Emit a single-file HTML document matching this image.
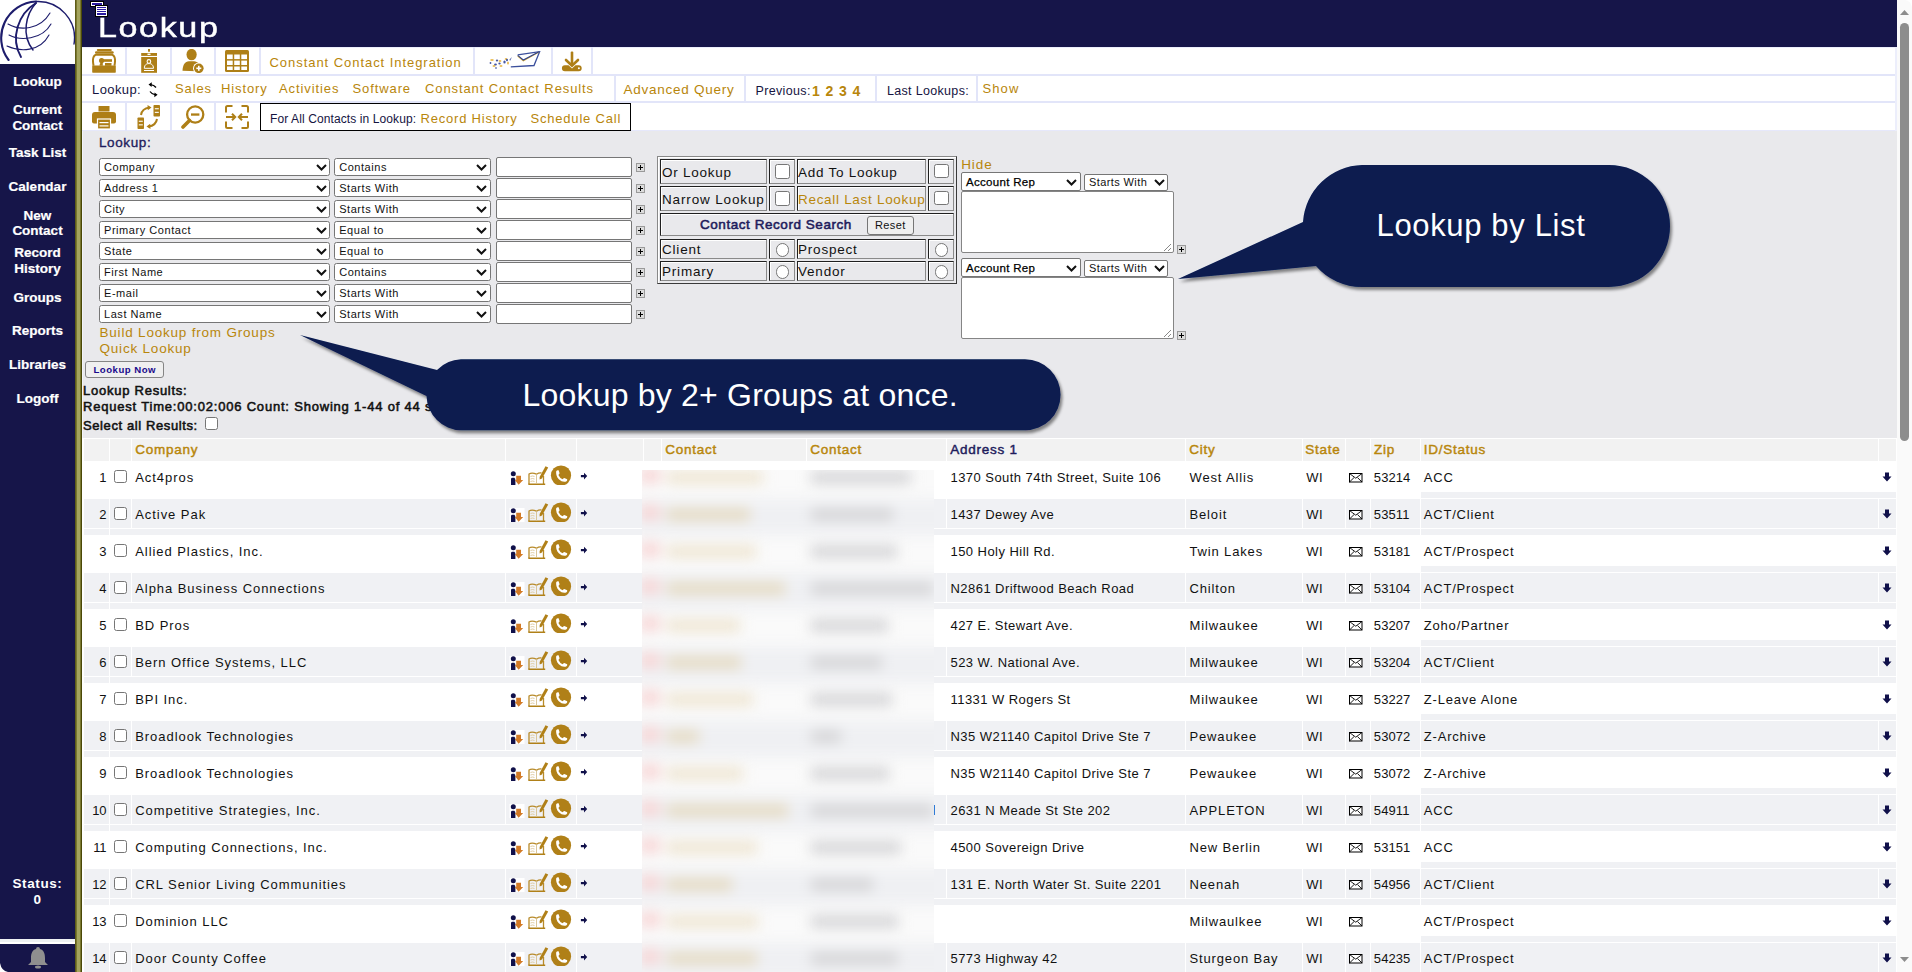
<!DOCTYPE html><html><head><meta charset="utf-8"><style>
*{box-sizing:border-box;}
html,body{margin:0;padding:0;}
body{width:1912px;height:972px;overflow:hidden;position:relative;background:#fff;font-family:"Liberation Sans", sans-serif;color:#111;}
.a{position:absolute;white-space:nowrap;}
.sel{position:absolute;height:18px;background:#fff;border:1.5px solid #767676;border-radius:2.5px;}
.chev{position:absolute;width:6px;height:6px;border-right:2px solid #111;border-bottom:2px solid #111;transform:rotate(45deg);}
.inp{position:absolute;height:20px;background:#fff;border:1.5px solid #767676;border-radius:2px;}
.plus{position:absolute;width:9px;height:9px;background:#dcdcdc;border:1px solid #9a9a9a;}
.plus:before{content:"";position:absolute;left:1px;top:3.1px;width:5px;height:1.4px;background:#000;}
.plus:after{content:"";position:absolute;left:2.8px;top:1px;width:1.4px;height:5px;background:#000;}
.cb{position:absolute;width:13px;height:13px;background:#fff;border:1px solid #767676;border-radius:2.5px;}
.rd{position:absolute;width:13px;height:13px;background:#fff;border:1px solid #767676;border-radius:50%;}
.tc{position:absolute;border:1px solid;border-color:#8a8a8a #2a2a2a #2a2a2a #8a8a8a;}
</style></head><body><svg width="0" height="0" style="position:absolute"><defs>
<g id="rowic">
<rect x="0.5" y="7" width="15" height="15" fill="#fff"/>
<circle cx="4.3" cy="9.8" r="2.5" fill="#10104a"/><path d="M2 15 Q2 13.8 3.5 13.8 H5.3 Q6.4 14.5 6.4 16 V21.4 H2z" fill="#10104a"/>
<path d="M7.2 11.8 H12 V15.9 H14.2 L9.6 20.8 L5.9 15.9 H7.2z" fill="#d27a26"/>
<path d="M20 20 V10 Q23 8.2 27.5 10.2 Q30 8.6 32.5 9 M34.5 12 V20" fill="none" stroke="#b88b2a" stroke-width="1.3"/>
<path d="M19.3 20.3 H36.2" stroke="#b08018" stroke-width="1.6"/>
<path d="M21.5 12.5 Q23.5 11.5 25.5 12.5 M21.5 15 Q23.5 14 25.5 15 M21.5 17.5 Q23.5 16.5 25.5 17.5" fill="none" stroke="#dcc79a" stroke-width="0.9"/>
<path d="M27.5 10.2 V20" stroke="#d6c08e" stroke-width="0.9"/>
<path d="M36.5 2.2 L39.2 3.6 L33 14.6 L30.6 15.5 L30.6 13z" fill="#b08018"/>
<circle cx="52" cy="11.5" r="10.1" fill="#b08018"/>
<path d="M47.2 7.3 Q48 5.8 49.6 6.3 L50.6 9.3 Q50 10.4 49.4 10.9 Q50.8 13.9 53.6 15.3 Q54.2 14.5 55.3 14 L58.2 15.2 Q58.6 16.8 57.2 17.5 Q53.4 18.6 49.8 15.2 Q46.5 11.8 47.2 7.3z" fill="#fff"/>
<path d="M71.9 11 H75 V8.7 L78.2 12.1 L75 15.5 V13.2 H71.9z" fill="#10104a"/>
</g>
<g id="env"><rect x="0.5" y="0.5" width="12.5" height="8.5" fill="#fff" stroke="#000" stroke-width="1"/><path d="M0.5 0.5 L6.75 5.2 L13 0.5 M0.5 9 L5 4.6 M13 9 L8.5 4.6" fill="none" stroke="#000" stroke-width="0.9"/></g>
<g id="dn"><path d="M3 0.5 H7 V4.5 H9.5 L5 9.5 L0.5 4.5 H3z" fill="#10104a"/></g>
</defs></svg><div class="a" style="left:0px;top:0px;width:75px;height:972px;background:#161549"></div>
<div class="a" style="left:0px;top:0px;width:75px;height:64px;background:#fff"></div>
<svg class="a" style="left:0;top:0" width="75" height="64" viewBox="0 0 75 64">
<g fill="none" stroke="#1d1c6c" stroke-linecap="round">
<path d="M8.6 60 A36.5 36.5 0 0 1 36 1.5" stroke-width="2.1"/><path d="M36 1.5 A36.5 36.5 0 0 1 74 44" stroke-width="1.4"/>
<path d="M36 3 C18 14 10 38 21 57" stroke-width="1.9"/>
<path d="M36 3 C26 14 21 35 33 50" stroke-width="1.5"/>
<path d="M8 24 C20 31 40 30 50 13" stroke-width="1.1"/>
<path d="M9 35 C20 41 42 40 51 24" stroke-width="1.1"/>
<path d="M7 46 C20 52 40 52 49 35" stroke-width="1.1"/>
</g></svg>
<div class="a" style="left:0;width:75px;text-align:center;top:74.6px;font-size:13.5px;line-height:13.5px;color:#fff;font-weight:bold;letter-spacing:0px;-webkit-text-stroke:0.2px #fff">Lookup</div>
<div class="a" style="left:0;width:75px;text-align:center;top:102.8px;font-size:13.5px;line-height:13.5px;color:#fff;font-weight:bold;letter-spacing:0px;-webkit-text-stroke:0.2px #fff">Current</div>
<div class="a" style="left:0;width:75px;text-align:center;top:119.2px;font-size:13.5px;line-height:13.5px;color:#fff;font-weight:bold;letter-spacing:0px;-webkit-text-stroke:0.2px #fff">Contact</div>
<div class="a" style="left:0;width:75px;text-align:center;top:146.2px;font-size:13.5px;line-height:13.5px;color:#fff;font-weight:bold;letter-spacing:0px;-webkit-text-stroke:0.2px #fff">Task List</div>
<div class="a" style="left:0;width:75px;text-align:center;top:180.2px;font-size:13.5px;line-height:13.5px;color:#fff;font-weight:bold;letter-spacing:0px;-webkit-text-stroke:0.2px #fff">Calendar</div>
<div class="a" style="left:0;width:75px;text-align:center;top:209.0px;font-size:13.5px;line-height:13.5px;color:#fff;font-weight:bold;letter-spacing:0px;-webkit-text-stroke:0.2px #fff">New</div>
<div class="a" style="left:0;width:75px;text-align:center;top:224.2px;font-size:13.5px;line-height:13.5px;color:#fff;font-weight:bold;letter-spacing:0px;-webkit-text-stroke:0.2px #fff">Contact</div>
<div class="a" style="left:0;width:75px;text-align:center;top:246.2px;font-size:13.5px;line-height:13.5px;color:#fff;font-weight:bold;letter-spacing:0px;-webkit-text-stroke:0.2px #fff">Record</div>
<div class="a" style="left:0;width:75px;text-align:center;top:262.2px;font-size:13.5px;line-height:13.5px;color:#fff;font-weight:bold;letter-spacing:0px;-webkit-text-stroke:0.2px #fff">History</div>
<div class="a" style="left:0;width:75px;text-align:center;top:290.5px;font-size:13.5px;line-height:13.5px;color:#fff;font-weight:bold;letter-spacing:0px;-webkit-text-stroke:0.2px #fff">Groups</div>
<div class="a" style="left:0;width:75px;text-align:center;top:324.4px;font-size:13.5px;line-height:13.5px;color:#fff;font-weight:bold;letter-spacing:0px;-webkit-text-stroke:0.2px #fff">Reports</div>
<div class="a" style="left:0;width:75px;text-align:center;top:358.2px;font-size:13.5px;line-height:13.5px;color:#fff;font-weight:bold;letter-spacing:0px;-webkit-text-stroke:0.2px #fff">Libraries</div>
<div class="a" style="left:0;width:75px;text-align:center;top:392.4px;font-size:13.5px;line-height:13.5px;color:#fff;font-weight:bold;letter-spacing:0px;-webkit-text-stroke:0.2px #fff">Logoff</div>
<div class="a" style="left:0;width:75px;text-align:center;top:877.2px;font-size:13.5px;line-height:13.5px;color:#fff;font-weight:bold;letter-spacing:0.6px">Status:</div>
<div class="a" style="left:0;width:75px;text-align:center;top:893.2px;font-size:13.5px;line-height:13.5px;color:#fff;font-weight:bold;letter-spacing:0.6px">0</div>
<div class="a" style="left:0px;top:939px;width:75px;height:3px;background:#eef1f3"></div>
<div class="a" style="left:0px;top:942px;width:75px;height:2px;background:#fff"></div>
<svg class="a" style="left:28px;top:945px" width="20" height="24" viewBox="0 0 20 24">
<path d="M10 2 a2 2 0 0 1 2 2 c4 1 5 5 5 9 l0 4 l3 3 l-20 0 l3 -3 l0 -4 c0 -4 1 -8 5 -9 a2 2 0 0 1 2 -2z" fill="#8f8f8f"/>
<ellipse cx="10" cy="22" rx="3" ry="1.5" fill="#8f8f8f"/></svg>
<div class="a" style="left:75px;top:0px;width:7px;height:972px;background:linear-gradient(90deg,#5e5c18 0,#5e5c18 1px,#7a7830 1px,#7a7830 2px,#a4a45e 2px,#a4a45e 5px,#7a7830 5px,#7a7830 5.6px,#4a4808 5.6px,#4a4808 7px)"></div>
<div class="a" style="left:82px;top:0px;width:1815px;height:47px;background:#161549"></div>
<svg class="a" style="left:90px;top:1px" width="19" height="16" viewBox="0 0 19 16" shape-rendering="crispEdges">
<rect x="0" y="0" width="14" height="6" fill="#000"/><rect x="1" y="1" width="12" height="4" fill="#fff"/><rect x="2" y="2" width="10" height="2" fill="#2a1aa0"/>
<rect x="5" y="4" width="13" height="12" fill="#000"/><rect x="6" y="5" width="11" height="10" fill="#fff"/>
<rect x="7" y="6" width="9" height="1" fill="#2a1aa0"/><rect x="7" y="8" width="9" height="1" fill="#2a1aa0"/><rect x="7" y="10" width="9" height="1" fill="#2a1aa0"/><rect x="7" y="12" width="9" height="2" fill="#2a1aa0"/>
</svg>
<div class="a" style="left:97.5px;top:13.8px;font-size:27.6px;line-height:27.6px;color:#fff;font-weight:400;letter-spacing:1.3px;transform:scaleX(1.235);transform-origin:0 0;-webkit-text-stroke:0.45px #fff;">Lookup</div>
<div class="a" style="left:1897px;top:0px;width:15px;height:972px;background:#fafafa"></div>
<svg class="a" style="left:1897px;top:0" width="15" height="972"><path d="M3 15 L7.5 10 L12 15z" fill="#8d8d8d"/><path d="M3 957 L12 957 L7.5 962z" fill="#8d8d8d"/><rect x="3" y="23" width="9" height="418" rx="4.5" fill="#8d8d8d"/></svg>
<div class="a" style="left:82px;top:47px;width:1815px;height:84px;background:#fff"></div>
<div class="a" style="left:82px;top:47px;width:1814px;height:1px;background:#eceefb"></div>
<div class="a" style="left:82px;top:74px;width:1814px;height:2px;background:#e2e5f9"></div>
<div class="a" style="left:82px;top:101px;width:1814px;height:2px;background:#e2e5f9"></div>
<div class="a" style="left:82px;top:130px;width:1814px;height:1px;background:#e6e8fb"></div>
<div class="a" style="left:1895px;top:47px;width:2px;height:84px;background:#eceefb"></div>
<div class="a" style="left:125px;top:47px;width:2px;height:27px;background:#e2e5f9"></div>
<div class="a" style="left:170px;top:47px;width:2px;height:27px;background:#e2e5f9"></div>
<div class="a" style="left:214px;top:47px;width:2px;height:27px;background:#e2e5f9"></div>
<div class="a" style="left:259px;top:47px;width:2px;height:27px;background:#e2e5f9"></div>
<div class="a" style="left:473px;top:47px;width:2px;height:27px;background:#e2e5f9"></div>
<div class="a" style="left:551px;top:47px;width:2px;height:27px;background:#e2e5f9"></div>
<div class="a" style="left:591px;top:47px;width:2px;height:27px;background:#e2e5f9"></div>
<div class="a" style="left:614px;top:76px;width:2px;height:25px;background:#e2e5f9"></div>
<div class="a" style="left:744px;top:76px;width:2px;height:25px;background:#e2e5f9"></div>
<div class="a" style="left:875px;top:76px;width:2px;height:25px;background:#e2e5f9"></div>
<div class="a" style="left:976px;top:76px;width:2px;height:25px;background:#e2e5f9"></div>
<div class="a" style="left:125px;top:103px;width:2px;height:28px;background:#e2e5f9"></div>
<div class="a" style="left:170px;top:103px;width:2px;height:28px;background:#e2e5f9"></div>
<div class="a" style="left:214px;top:103px;width:2px;height:28px;background:#e2e5f9"></div>
<svg class="a" style="left:92px;top:49px" width="24" height="24" viewBox="0 0 24 24" fill="#ae7f17">
<rect x="4.8" y="0" width="15" height="2" rx="1"/><rect x="3" y="2.3" width="18.7" height="2.4" rx="1.2"/>
<path d="M1.6 16.8 C0.6 12 0.4 7.2 3.6 5.8 H20.4 C23.6 7.2 23.4 12 22.4 16.8" fill="none" stroke="#ae7f17" stroke-width="2"/>
<circle cx="9.6" cy="11.6" r="2.6"/><rect x="9.6" y="10.2" width="10.4" height="2.6"/>
<path d="M7.6 16.8 Q7.6 13.5 9.6 13.8 H10.8 V16.8z"/><rect x="13" y="14" width="6.5" height="2.8"/>
<rect x="0.2" y="16.5" width="23.6" height="7.2" rx="0.6"/></svg>
<svg class="a" style="left:141px;top:49px" width="16" height="24" viewBox="0 0 16 24" fill="#ae7f17">
<rect x="7" y="0" width="2" height="2.7"/><rect x="0.2" y="4" width="15.8" height="2.9"/><rect x="6.5" y="4.6" width="3" height="1.4" fill="#fff"/>
<rect x="0.2" y="8" width="15.8" height="15.8"/>
<circle cx="7.9" cy="12.4" r="1.8" fill="none" stroke="#fff" stroke-width="1.1"/>
<path d="M3.3 19.3 C3.5 15.6 5.5 14.6 7.9 14.6 C10.3 14.6 12.3 15.6 12.5 19.3z" fill="none" stroke="#fff" stroke-width="1"/>
<rect x="3" y="21" width="10" height="1" fill="#fff"/></svg>
<svg class="a" style="left:182px;top:49px" width="24" height="24" viewBox="0 0 24 24" fill="#ae7f17">
<ellipse cx="9.6" cy="5.6" rx="5.1" ry="5.7"/>
<path d="M0.5 21.8 C0.8 15.5 3 12.8 7 12.3 L12 12.3 C14 12.5 15.5 13.2 16.6 14.2 L15 22.2z"/>
<circle cx="16.8" cy="19.3" r="5.8" fill="#fff"/><circle cx="16.8" cy="19.3" r="4.8"/>
<rect x="14.3" y="18.5" width="5" height="1.6" fill="#fff"/><rect x="16" y="16.8" width="1.6" height="5" fill="#fff"/></svg>
<svg class="a" style="left:225px;top:50px" width="24" height="22" viewBox="0 0 24 22" fill="#ae7f17">
<rect x="0" y="0" width="24" height="22" rx="1.5"/>
<g fill="#fff"><rect x="2" y="4.5" width="5.7" height="4.6"/><rect x="9.2" y="4.5" width="5.6" height="4.6"/><rect x="16.3" y="4.5" width="5.7" height="4.6"/>
<rect x="2" y="10.6" width="5.7" height="4.4"/><rect x="9.2" y="10.6" width="5.6" height="4.4"/><rect x="16.3" y="10.6" width="5.7" height="4.4"/>
<rect x="2" y="16.5" width="5.7" height="3.5"/><rect x="9.2" y="16.5" width="5.6" height="3.5"/><rect x="16.3" y="16.5" width="5.7" height="3.5"/></g></svg>
<div class="a" style="left:269.5px;top:56.3px;font-size:13px;line-height:13px;color:#b8860b;font-weight:400;letter-spacing:0.95px;">Constant Contact Integration</div>
<svg class="a" style="left:489px;top:51px" width="52" height="19" viewBox="0 0 52 19">
<path d="M28.7 3.8 L50.6 0.7 L45 14.5 L21.8 15.8" fill="none" stroke="#3b4f9c" stroke-width="1.3"/>
<path d="M28.7 5 L34.3 9.8 L50 1" fill="none" stroke="#e0b030" stroke-width="1.1"/>
<path d="M28.7 4.4 L34.3 9 L50 0.8" fill="none" stroke="#2e418e" stroke-width="1.1"/>
<g fill="#e8b43a" opacity="0.85"><ellipse cx="3" cy="9" rx="1.8" ry="0.9"/><ellipse cx="5" cy="15" rx="1.5" ry="1"/><ellipse cx="11" cy="10" rx="1.4" ry="1"/><ellipse cx="12" cy="15" rx="1.5" ry="1"/><ellipse cx="17" cy="8" rx="1.3" ry="0.9"/><ellipse cx="19" cy="12" rx="1" ry="1.6"/></g>
<g fill="#34479a" opacity="0.9"><ellipse cx="1.5" cy="12" rx="0.9" ry="0.9"/><ellipse cx="8" cy="9.5" rx="1.2" ry="0.9"/><ellipse cx="6.5" cy="13.5" rx="1.4" ry="0.9"/><ellipse cx="10.5" cy="12.5" rx="1.2" ry="0.9"/><ellipse cx="7" cy="17" rx="1" ry="0.8"/><ellipse cx="15.5" cy="11" rx="1.2" ry="1.6"/><ellipse cx="18" cy="9" rx="1" ry="1.2"/><path d="M20.5 8.5 L23 6 L21 10z"/></g></svg>
<svg class="a" style="left:561px;top:51px" width="22" height="21" viewBox="0 0 22 21" fill="#ae7f17">
<rect x="9.7" y="0.5" width="2.6" height="13.5" rx="1"/><path d="M5 9 L11 14.8 L17 9" fill="none" stroke="#ae7f17" stroke-width="2.6" stroke-linecap="round"/>
<path d="M3.9 14.2 H7.5 L11 17.5 L14.5 14.2 H17.7 A3 3 0 0 1 17.7 20.2 H3.9 A3 3 0 0 1 3.9 14.2z"/><circle cx="17.9" cy="17.3" r="1" fill="#fff"/></svg>
<div class="a" style="left:92.0px;top:82.5px;font-size:13px;line-height:13px;color:#15143f;font-weight:400;letter-spacing:0.4px;">Lookup:</div>
<svg class="a" style="left:146px;top:80px" width="14" height="20" viewBox="146 80 14 20">
<path d="M156 87.5 Q154 84.8 150.5 84.6" fill="none" stroke="#000" stroke-width="1.3"/><path d="M148.5 84.6 L151.8 82.2 L151.6 87z" fill="#000"/>
<path d="M150 91.5 Q152 94.5 155.5 94.8" fill="none" stroke="#000" stroke-width="1.3"/><path d="M157.6 94.8 L154.3 97.2 L154.5 92.4z" fill="#000"/></svg>
<div class="a" style="left:175.0px;top:82.1px;font-size:13px;line-height:13px;color:#b8860b;font-weight:400;letter-spacing:0.9px;">Sales</div>
<div class="a" style="left:221.0px;top:82.1px;font-size:13px;line-height:13px;color:#b8860b;font-weight:400;letter-spacing:0.9px;">History</div>
<div class="a" style="left:279.0px;top:82.1px;font-size:13px;line-height:13px;color:#b8860b;font-weight:400;letter-spacing:0.9px;">Activities</div>
<div class="a" style="left:352.5px;top:82.1px;font-size:13px;line-height:13px;color:#b8860b;font-weight:400;letter-spacing:0.9px;">Software</div>
<div class="a" style="left:425.0px;top:82.1px;font-size:13px;line-height:13px;color:#b8860b;font-weight:400;letter-spacing:0.9px;">Constant Contact Results</div>
<div class="a" style="left:623.5px;top:83.4px;font-size:13.5px;line-height:13.5px;color:#b8860b;font-weight:400;letter-spacing:0.75px;">Advanced Query</div>
<div class="a" style="left:755.5px;top:84.8px;font-size:12.5px;line-height:12.5px;color:#15143f;font-weight:400;letter-spacing:0.35px;">Previous:</div>
<div class="a" style="left:812.0px;top:83.7px;font-size:14px;line-height:14px;color:#b8860b;font-weight:700;letter-spacing:0.9px;">1 2 3 4</div>
<div class="a" style="left:887.0px;top:84.8px;font-size:12.5px;line-height:12.5px;color:#15143f;font-weight:400;letter-spacing:0.32px;">Last Lookups:</div>
<div class="a" style="left:982.5px;top:81.7px;font-size:13px;line-height:13px;color:#b8860b;font-weight:400;letter-spacing:1.1px;">Show</div>
<svg class="a" style="left:92px;top:106px" width="24" height="23" viewBox="0 0 24 23" fill="#ae7f17">
<rect x="6.5" y="0" width="11" height="5.5"/><path d="M3 6 H21 Q24 6 24 9 V15.5 Q24 17.5 22 17.5 H2 Q0 17.5 0 15.5 V9 Q0 6 3 6z"/>
<rect x="5.5" y="13" width="13" height="10" fill="#ae7f17" stroke="#fff" stroke-width="1.2"/>
<rect x="7.5" y="16" width="9" height="1.2" fill="#fff"/><rect x="7.5" y="19.3" width="9" height="1.2" fill="#fff"/></svg>
<svg class="a" style="left:137px;top:105px" width="24" height="24" viewBox="0 0 24 24" fill="#ae7f17">
<rect x="16.5" y="0" width="6.5" height="11.5" rx="0.8"/><rect x="17.8" y="3.2" width="4" height="1.1" fill="#fff"/><rect x="17.8" y="6.8" width="4" height="1.1" fill="#fff"/>
<rect x="0.5" y="12.5" width="6.5" height="11.5" rx="0.8"/><rect x="1.8" y="15.7" width="4" height="1.1" fill="#fff"/><rect x="1.8" y="19.3" width="4" height="1.1" fill="#fff"/>
<path d="M4 10 Q5 3.5 12.5 2.5" fill="none" stroke="#ae7f17" stroke-width="2"/><path d="M10.5 0 L14.5 2.6 L10.8 5.3z"/>
<path d="M20 14 Q19 20.5 11.5 21.5" fill="none" stroke="#ae7f17" stroke-width="2"/><path d="M13.5 24 L9.5 21.4 L13.2 18.7z"/></svg>
<svg class="a" style="left:181px;top:105px" width="24" height="24" viewBox="0 0 24 24">
<circle cx="14.2" cy="9.5" r="8.1" fill="none" stroke="#ae7f17" stroke-width="2.3"/><rect x="10" y="8.4" width="8.4" height="2.3" fill="#ae7f17"/>
<path d="M8.5 15.5 L2 22" stroke="#ae7f17" stroke-width="3.6" stroke-linecap="round"/></svg>
<svg class="a" style="left:225px;top:105px" width="24" height="24" viewBox="0 0 24 24" fill="none" stroke="#ae7f17" stroke-width="2">
<path d="M7.5 1 H2.5 Q1 1 1 2.5 V7.5"/><path d="M16.5 1 H21.5 Q23 1 23 2.5 V7.5"/><path d="M7.5 23 H2.5 Q1 23 1 21.5 V16.5"/><path d="M16.5 23 H21.5 Q23 23 23 21.5 V16.5"/>
<path d="M1 12 H10 M7 8.8 L10.2 12 L7 15.2"/><path d="M23 12 H14 M17 8.8 L13.8 12 L17 15.2"/></svg>
<div class="a" style="left:260px;top:103px;width:371px;height:28px;background:#fff;border:1.5px solid #000"></div>
<div class="a" style="left:270.0px;top:112.9px;font-size:12px;line-height:12px;color:#15143f;font-weight:400;letter-spacing:0.1px;">For All Contacts in Lookup:</div>
<div class="a" style="left:420.5px;top:112.1px;font-size:13px;line-height:13px;color:#b8860b;font-weight:400;letter-spacing:0.8px;">Record History</div>
<div class="a" style="left:530.5px;top:112.1px;font-size:13px;line-height:13px;color:#b8860b;font-weight:400;letter-spacing:0.8px;">Schedule Call</div>
<div class="a" style="left:83px;top:131px;width:1814px;height:307px;background:#e9e9ec"></div>
<div class="a" style="left:82px;top:131px;width:1px;height:307px;background:#f3f4fa"></div>
<div class="a" style="left:99.0px;top:135.8px;font-size:13.5px;line-height:13.5px;color:#1e1c5c;font-weight:400;letter-spacing:0.6px;-webkit-text-stroke:0.35px #1e1c5c;">Lookup:</div>
<div class="sel" style="left:99px;top:158px;width:231px"></div>
<svg class="a" style="left:315.5px;top:163.5px" width="11" height="7" viewBox="0 0 11 7"><path d="M1 1 L5.5 5.5 L10 1" fill="none" stroke="#111" stroke-width="2"/></svg>
<div class="a" style="left:104.0px;top:161.9px;font-size:11px;line-height:11px;color:#111;font-weight:400;letter-spacing:0.55px;">Company</div>
<div class="sel" style="left:334px;top:158px;width:157px"></div>
<svg class="a" style="left:476px;top:163.5px" width="11" height="7" viewBox="0 0 11 7"><path d="M1 1 L5.5 5.5 L10 1" fill="none" stroke="#111" stroke-width="2"/></svg>
<div class="a" style="left:339.2px;top:161.9px;font-size:11px;line-height:11px;color:#111;font-weight:400;letter-spacing:0.55px;">Contains</div>
<div class="inp" style="left:496px;top:157px;width:136px"></div>
<div class="plus" style="left:636px;top:163px"></div>
<div class="sel" style="left:99px;top:179px;width:231px"></div>
<svg class="a" style="left:315.5px;top:184.5px" width="11" height="7" viewBox="0 0 11 7"><path d="M1 1 L5.5 5.5 L10 1" fill="none" stroke="#111" stroke-width="2"/></svg>
<div class="a" style="left:104.0px;top:182.9px;font-size:11px;line-height:11px;color:#111;font-weight:400;letter-spacing:0.55px;">Address 1</div>
<div class="sel" style="left:334px;top:179px;width:157px"></div>
<svg class="a" style="left:476px;top:184.5px" width="11" height="7" viewBox="0 0 11 7"><path d="M1 1 L5.5 5.5 L10 1" fill="none" stroke="#111" stroke-width="2"/></svg>
<div class="a" style="left:339.2px;top:182.9px;font-size:11px;line-height:11px;color:#111;font-weight:400;letter-spacing:0.55px;">Starts With</div>
<div class="inp" style="left:496px;top:178px;width:136px"></div>
<div class="plus" style="left:636px;top:184px"></div>
<div class="sel" style="left:99px;top:200px;width:231px"></div>
<svg class="a" style="left:315.5px;top:205.5px" width="11" height="7" viewBox="0 0 11 7"><path d="M1 1 L5.5 5.5 L10 1" fill="none" stroke="#111" stroke-width="2"/></svg>
<div class="a" style="left:104.0px;top:203.9px;font-size:11px;line-height:11px;color:#111;font-weight:400;letter-spacing:0.55px;">City</div>
<div class="sel" style="left:334px;top:200px;width:157px"></div>
<svg class="a" style="left:476px;top:205.5px" width="11" height="7" viewBox="0 0 11 7"><path d="M1 1 L5.5 5.5 L10 1" fill="none" stroke="#111" stroke-width="2"/></svg>
<div class="a" style="left:339.2px;top:203.9px;font-size:11px;line-height:11px;color:#111;font-weight:400;letter-spacing:0.55px;">Starts With</div>
<div class="inp" style="left:496px;top:199px;width:136px"></div>
<div class="plus" style="left:636px;top:205px"></div>
<div class="sel" style="left:99px;top:221px;width:231px"></div>
<svg class="a" style="left:315.5px;top:226.5px" width="11" height="7" viewBox="0 0 11 7"><path d="M1 1 L5.5 5.5 L10 1" fill="none" stroke="#111" stroke-width="2"/></svg>
<div class="a" style="left:104.0px;top:224.9px;font-size:11px;line-height:11px;color:#111;font-weight:400;letter-spacing:0.55px;">Primary Contact</div>
<div class="sel" style="left:334px;top:221px;width:157px"></div>
<svg class="a" style="left:476px;top:226.5px" width="11" height="7" viewBox="0 0 11 7"><path d="M1 1 L5.5 5.5 L10 1" fill="none" stroke="#111" stroke-width="2"/></svg>
<div class="a" style="left:339.2px;top:224.9px;font-size:11px;line-height:11px;color:#111;font-weight:400;letter-spacing:0.55px;">Equal to</div>
<div class="inp" style="left:496px;top:220px;width:136px"></div>
<div class="plus" style="left:636px;top:226px"></div>
<div class="sel" style="left:99px;top:242px;width:231px"></div>
<svg class="a" style="left:315.5px;top:247.5px" width="11" height="7" viewBox="0 0 11 7"><path d="M1 1 L5.5 5.5 L10 1" fill="none" stroke="#111" stroke-width="2"/></svg>
<div class="a" style="left:104.0px;top:245.9px;font-size:11px;line-height:11px;color:#111;font-weight:400;letter-spacing:0.55px;">State</div>
<div class="sel" style="left:334px;top:242px;width:157px"></div>
<svg class="a" style="left:476px;top:247.5px" width="11" height="7" viewBox="0 0 11 7"><path d="M1 1 L5.5 5.5 L10 1" fill="none" stroke="#111" stroke-width="2"/></svg>
<div class="a" style="left:339.2px;top:245.9px;font-size:11px;line-height:11px;color:#111;font-weight:400;letter-spacing:0.55px;">Equal to</div>
<div class="inp" style="left:496px;top:241px;width:136px"></div>
<div class="plus" style="left:636px;top:247px"></div>
<div class="sel" style="left:99px;top:263px;width:231px"></div>
<svg class="a" style="left:315.5px;top:268.5px" width="11" height="7" viewBox="0 0 11 7"><path d="M1 1 L5.5 5.5 L10 1" fill="none" stroke="#111" stroke-width="2"/></svg>
<div class="a" style="left:104.0px;top:266.9px;font-size:11px;line-height:11px;color:#111;font-weight:400;letter-spacing:0.55px;">First Name</div>
<div class="sel" style="left:334px;top:263px;width:157px"></div>
<svg class="a" style="left:476px;top:268.5px" width="11" height="7" viewBox="0 0 11 7"><path d="M1 1 L5.5 5.5 L10 1" fill="none" stroke="#111" stroke-width="2"/></svg>
<div class="a" style="left:339.2px;top:266.9px;font-size:11px;line-height:11px;color:#111;font-weight:400;letter-spacing:0.55px;">Contains</div>
<div class="inp" style="left:496px;top:262px;width:136px"></div>
<div class="plus" style="left:636px;top:268px"></div>
<div class="sel" style="left:99px;top:284px;width:231px"></div>
<svg class="a" style="left:315.5px;top:289.5px" width="11" height="7" viewBox="0 0 11 7"><path d="M1 1 L5.5 5.5 L10 1" fill="none" stroke="#111" stroke-width="2"/></svg>
<div class="a" style="left:104.0px;top:287.9px;font-size:11px;line-height:11px;color:#111;font-weight:400;letter-spacing:0.55px;">E-mail</div>
<div class="sel" style="left:334px;top:284px;width:157px"></div>
<svg class="a" style="left:476px;top:289.5px" width="11" height="7" viewBox="0 0 11 7"><path d="M1 1 L5.5 5.5 L10 1" fill="none" stroke="#111" stroke-width="2"/></svg>
<div class="a" style="left:339.2px;top:287.9px;font-size:11px;line-height:11px;color:#111;font-weight:400;letter-spacing:0.55px;">Starts With</div>
<div class="inp" style="left:496px;top:283px;width:136px"></div>
<div class="plus" style="left:636px;top:289px"></div>
<div class="sel" style="left:99px;top:305px;width:231px"></div>
<svg class="a" style="left:315.5px;top:310.5px" width="11" height="7" viewBox="0 0 11 7"><path d="M1 1 L5.5 5.5 L10 1" fill="none" stroke="#111" stroke-width="2"/></svg>
<div class="a" style="left:104.0px;top:308.9px;font-size:11px;line-height:11px;color:#111;font-weight:400;letter-spacing:0.55px;">Last Name</div>
<div class="sel" style="left:334px;top:305px;width:157px"></div>
<svg class="a" style="left:476px;top:310.5px" width="11" height="7" viewBox="0 0 11 7"><path d="M1 1 L5.5 5.5 L10 1" fill="none" stroke="#111" stroke-width="2"/></svg>
<div class="a" style="left:339.2px;top:308.9px;font-size:11px;line-height:11px;color:#111;font-weight:400;letter-spacing:0.55px;">Starts With</div>
<div class="inp" style="left:496px;top:304px;width:136px"></div>
<div class="plus" style="left:636px;top:310px"></div>
<div class="a" style="left:99.5px;top:325.9px;font-size:13.5px;line-height:13.5px;color:#b8860b;font-weight:400;letter-spacing:0.8px;">Build Lookup from Groups</div>
<div class="a" style="left:99.5px;top:342.2px;font-size:13.5px;line-height:13.5px;color:#b8860b;font-weight:400;letter-spacing:0.8px;">Quick Lookup</div>
<div class="a" style="left:85px;top:361px;width:79px;height:17px;background:#efefef;border:1px solid #858585;border-radius:3px"></div>
<div class="a" style="left:93.5px;top:364.9px;font-size:9.6px;line-height:9.6px;color:#1a0a8c;font-weight:700;letter-spacing:0.5px;">Lookup Now</div>
<div class="a" style="left:83.0px;top:384.3px;font-size:13px;line-height:13px;color:#111;font-weight:400;letter-spacing:0.75px;-webkit-text-stroke:0.55px #111;">Lookup Results:</div>
<div class="a" style="left:83.0px;top:400.4px;font-size:13px;line-height:13px;color:#111;font-weight:400;letter-spacing:0.8px;-webkit-text-stroke:0.55px #111;">Request Time:00:02:006 Count: Showing 1-44 of 44 s</div>
<div class="a" style="left:83.0px;top:419.2px;font-size:13px;line-height:13px;color:#111;font-weight:400;letter-spacing:0.6px;-webkit-text-stroke:0.55px #111;">Select all Results:</div>
<div class="cb" style="left:205px;top:417px;width:13px;height:13px"></div>
<div class="a" style="left:657px;top:156px;width:300px;height:128px;border:1px solid;border-color:#888 #3a3a3a #3a3a3a #888;box-shadow:inset 1px 1px 0 #fff"></div>
<div class="a" style="left:660px;top:159px;width:107px;height:25px;border:1px solid;border-color:#202020 #8a8a8a #8a8a8a #202020;box-shadow:inset 1px 1px 0 #fff"></div>
<div class="a" style="left:769px;top:159px;width:26px;height:25px;border:1px solid;border-color:#202020 #8a8a8a #8a8a8a #202020;box-shadow:inset 1px 1px 0 #fff"></div>
<div class="a" style="left:797px;top:159px;width:129px;height:25px;border:1px solid;border-color:#202020 #8a8a8a #8a8a8a #202020;box-shadow:inset 1px 1px 0 #fff"></div>
<div class="a" style="left:928px;top:159px;width:26px;height:25px;border:1px solid;border-color:#202020 #8a8a8a #8a8a8a #202020;box-shadow:inset 1px 1px 0 #fff"></div>
<div class="a" style="left:660px;top:186px;width:107px;height:25px;border:1px solid;border-color:#202020 #8a8a8a #8a8a8a #202020;box-shadow:inset 1px 1px 0 #fff"></div>
<div class="a" style="left:769px;top:186px;width:26px;height:25px;border:1px solid;border-color:#202020 #8a8a8a #8a8a8a #202020;box-shadow:inset 1px 1px 0 #fff"></div>
<div class="a" style="left:797px;top:186px;width:129px;height:25px;border:1px solid;border-color:#202020 #8a8a8a #8a8a8a #202020;box-shadow:inset 1px 1px 0 #fff"></div>
<div class="a" style="left:928px;top:186px;width:26px;height:25px;border:1px solid;border-color:#202020 #8a8a8a #8a8a8a #202020;box-shadow:inset 1px 1px 0 #fff"></div>
<div class="a" style="left:660px;top:213px;width:294px;height:23px;border:1px solid;border-color:#202020 #8a8a8a #8a8a8a #202020;box-shadow:inset 1px 1px 0 #fff"></div>
<div class="a" style="left:660px;top:239px;width:107px;height:20px;border:1px solid;border-color:#202020 #8a8a8a #8a8a8a #202020;box-shadow:inset 1px 1px 0 #fff"></div>
<div class="a" style="left:769px;top:239px;width:26px;height:20px;border:1px solid;border-color:#202020 #8a8a8a #8a8a8a #202020;box-shadow:inset 1px 1px 0 #fff"></div>
<div class="a" style="left:797px;top:239px;width:129px;height:20px;border:1px solid;border-color:#202020 #8a8a8a #8a8a8a #202020;box-shadow:inset 1px 1px 0 #fff"></div>
<div class="a" style="left:928px;top:239px;width:26px;height:20px;border:1px solid;border-color:#202020 #8a8a8a #8a8a8a #202020;box-shadow:inset 1px 1px 0 #fff"></div>
<div class="a" style="left:660px;top:261px;width:107px;height:20px;border:1px solid;border-color:#202020 #8a8a8a #8a8a8a #202020;box-shadow:inset 1px 1px 0 #fff"></div>
<div class="a" style="left:769px;top:261px;width:26px;height:20px;border:1px solid;border-color:#202020 #8a8a8a #8a8a8a #202020;box-shadow:inset 1px 1px 0 #fff"></div>
<div class="a" style="left:797px;top:261px;width:129px;height:20px;border:1px solid;border-color:#202020 #8a8a8a #8a8a8a #202020;box-shadow:inset 1px 1px 0 #fff"></div>
<div class="a" style="left:928px;top:261px;width:26px;height:20px;border:1px solid;border-color:#202020 #8a8a8a #8a8a8a #202020;box-shadow:inset 1px 1px 0 #fff"></div>
<div class="a" style="left:662.0px;top:165.7px;font-size:13.5px;line-height:13.5px;color:#111;font-weight:400;letter-spacing:0.75px;">Or Lookup</div>
<div class="a" style="left:798.0px;top:165.7px;font-size:13.5px;line-height:13.5px;color:#111;font-weight:400;letter-spacing:0.75px;">Add To Lookup</div>
<div class="a" style="left:662.0px;top:192.7px;font-size:13.5px;line-height:13.5px;color:#111;font-weight:400;letter-spacing:0.85px;">Narrow Lookup</div>
<div class="a" style="left:798.0px;top:192.7px;font-size:13.5px;line-height:13.5px;color:#b8860b;font-weight:400;letter-spacing:0.7px;">Recall Last Lookup</div>
<div class="a" style="left:700.0px;top:218.2px;font-size:13.5px;line-height:13.5px;color:#1e1c5c;font-weight:400;letter-spacing:0.55px;-webkit-text-stroke:0.55px #1e1c5c;">Contact Record Search</div>
<div class="a" style="left:867px;top:215.5px;width:47px;height:19px;background:#efefef;border:1px solid #767676;border-radius:3px"></div>
<div class="a" style="left:875.0px;top:219.9px;font-size:11px;line-height:11px;color:#111;font-weight:400;letter-spacing:0.4px;">Reset</div>
<div class="a" style="left:662.0px;top:242.7px;font-size:13.5px;line-height:13.5px;color:#111;font-weight:400;letter-spacing:0.8px;">Client</div>
<div class="a" style="left:798.0px;top:242.7px;font-size:13.5px;line-height:13.5px;color:#111;font-weight:400;letter-spacing:0.8px;">Prospect</div>
<div class="a" style="left:662.0px;top:264.7px;font-size:13.5px;line-height:13.5px;color:#111;font-weight:400;letter-spacing:0.8px;">Primary</div>
<div class="a" style="left:798.0px;top:264.7px;font-size:13.5px;line-height:13.5px;color:#111;font-weight:400;letter-spacing:0.8px;">Vendor</div>
<div class="cb" style="left:775px;top:164px;width:14.6px;height:14.6px"></div>
<div class="cb" style="left:934.3px;top:164px;width:14.3px;height:14.3px"></div>
<div class="cb" style="left:775px;top:191px;width:14.6px;height:14.6px"></div>
<div class="cb" style="left:934.3px;top:191px;width:14.3px;height:14.3px"></div>
<div class="rd" style="left:775.5px;top:243.3px;width:13.6px;height:13.6px"></div>
<div class="rd" style="left:934.6px;top:243.3px;width:13.6px;height:13.6px"></div>
<div class="rd" style="left:775.5px;top:265.3px;width:13.6px;height:13.6px"></div>
<div class="rd" style="left:934.6px;top:265.3px;width:13.6px;height:13.6px"></div>
<div class="a" style="left:961.2px;top:157.7px;font-size:13.5px;line-height:13.5px;color:#b8860b;font-weight:400;letter-spacing:0.9px;">Hide</div>
<div class="sel" style="left:961px;top:172px;width:120px;height:19px;border-width:1px;border-radius:2px"></div>
<svg class="a" style="left:1066px;top:178.5px" width="11" height="7" viewBox="0 0 11 7"><path d="M1 1 L5.5 5.5 L10 1" fill="none" stroke="#111" stroke-width="2"/></svg>
<div class="a" style="left:966.0px;top:176.8px;font-size:11.5px;line-height:11.5px;color:#000;font-weight:400;letter-spacing:0.3px;-webkit-text-stroke:0.25px #000;">Account Rep</div>
<div class="sel" style="left:1084px;top:173.5px;width:84px;height:17px;border-width:1px;border-radius:2px"></div>
<svg class="a" style="left:1154px;top:178.5px" width="11" height="7" viewBox="0 0 11 7"><path d="M1 1 L5.5 5.5 L10 1" fill="none" stroke="#111" stroke-width="2"/></svg>
<div class="a" style="left:1089.0px;top:176.9px;font-size:11px;line-height:11px;color:#111;font-weight:400;letter-spacing:0.4px;">Starts With</div>
<div class="a" style="left:961px;top:191px;width:213px;height:62px;background:#fff;border:1px solid #858585;border-radius:2px"></div>
<svg class="a" style="left:1162px;top:242px" width="10" height="10"><path d="M9 2 L2 9 M9 6 L6 9" stroke="#888" stroke-width="1"/></svg>
<div class="plus" style="left:1177px;top:245px"></div>
<div class="sel" style="left:961px;top:258px;width:120px;height:19px;border-width:1px;border-radius:2px"></div>
<svg class="a" style="left:1066px;top:264.5px" width="11" height="7" viewBox="0 0 11 7"><path d="M1 1 L5.5 5.5 L10 1" fill="none" stroke="#111" stroke-width="2"/></svg>
<div class="a" style="left:966.0px;top:262.8px;font-size:11.5px;line-height:11.5px;color:#000;font-weight:400;letter-spacing:0.3px;-webkit-text-stroke:0.25px #000;">Account Rep</div>
<div class="sel" style="left:1084px;top:259.5px;width:84px;height:17px;border-width:1px;border-radius:2px"></div>
<svg class="a" style="left:1154px;top:264.5px" width="11" height="7" viewBox="0 0 11 7"><path d="M1 1 L5.5 5.5 L10 1" fill="none" stroke="#111" stroke-width="2"/></svg>
<div class="a" style="left:1089.0px;top:262.9px;font-size:11px;line-height:11px;color:#111;font-weight:400;letter-spacing:0.4px;">Starts With</div>
<div class="a" style="left:961px;top:277px;width:213px;height:62px;background:#fff;border:1px solid #858585;border-radius:2px"></div>
<svg class="a" style="left:1162px;top:328px" width="10" height="10"><path d="M9 2 L2 9 M9 6 L6 9" stroke="#888" stroke-width="1"/></svg>
<div class="plus" style="left:1177px;top:331px"></div>
<div class="a" style="left:84px;top:439px;width:1812px;height:22px;background:#f2f2f2"></div>
<div class="a" style="left:109px;top:439px;width:1px;height:22px;background:#fff"></div>
<div class="a" style="left:131px;top:439px;width:1px;height:22px;background:#fff"></div>
<div class="a" style="left:505px;top:439px;width:1px;height:22px;background:#fff"></div>
<div class="a" style="left:576px;top:439px;width:1px;height:22px;background:#fff"></div>
<div class="a" style="left:643px;top:439px;width:1px;height:22px;background:#fff"></div>
<div class="a" style="left:661px;top:439px;width:1px;height:22px;background:#fff"></div>
<div class="a" style="left:806px;top:439px;width:1px;height:22px;background:#fff"></div>
<div class="a" style="left:946px;top:439px;width:1px;height:22px;background:#fff"></div>
<div class="a" style="left:1185px;top:439px;width:1px;height:22px;background:#fff"></div>
<div class="a" style="left:1302px;top:439px;width:1px;height:22px;background:#fff"></div>
<div class="a" style="left:1345px;top:439px;width:1px;height:22px;background:#fff"></div>
<div class="a" style="left:1370px;top:439px;width:1px;height:22px;background:#fff"></div>
<div class="a" style="left:1420px;top:439px;width:1px;height:22px;background:#fff"></div>
<div class="a" style="left:1878px;top:439px;width:1px;height:22px;background:#fff"></div>
<div class="a" style="left:135.2px;top:442.9px;font-size:13.5px;line-height:13.5px;color:#b8860b;font-weight:400;letter-spacing:0.75px;-webkit-text-stroke:0.45px #b8860b;">Company</div>
<div class="a" style="left:665.2px;top:442.9px;font-size:13.5px;line-height:13.5px;color:#b8860b;font-weight:400;letter-spacing:0.75px;-webkit-text-stroke:0.45px #b8860b;">Contact</div>
<div class="a" style="left:810.2px;top:442.9px;font-size:13.5px;line-height:13.5px;color:#b8860b;font-weight:400;letter-spacing:0.75px;-webkit-text-stroke:0.45px #b8860b;">Contact</div>
<div class="a" style="left:950.2px;top:442.9px;font-size:13.5px;line-height:13.5px;color:#1e1c5c;font-weight:400;letter-spacing:0.75px;-webkit-text-stroke:0.45px #1e1c5c;">Address 1</div>
<div class="a" style="left:1189.2px;top:442.9px;font-size:13.5px;line-height:13.5px;color:#b8860b;font-weight:400;letter-spacing:0.75px;-webkit-text-stroke:0.45px #b8860b;">City</div>
<div class="a" style="left:1305.2px;top:442.9px;font-size:13.5px;line-height:13.5px;color:#b8860b;font-weight:400;letter-spacing:0.75px;-webkit-text-stroke:0.45px #b8860b;">State</div>
<div class="a" style="left:1374.0px;top:442.9px;font-size:13.5px;line-height:13.5px;color:#b8860b;font-weight:400;letter-spacing:0.75px;-webkit-text-stroke:0.45px #b8860b;">Zip</div>
<div class="a" style="left:1423.8px;top:442.9px;font-size:13.5px;line-height:13.5px;color:#b8860b;font-weight:400;letter-spacing:0.75px;-webkit-text-stroke:0.45px #b8860b;">ID/Status</div>
<div class="a" style="left:1421px;top:492px;width:475px;height:6px;background:#f0f1f4"></div>
<div class="a" style="left:84px;top:499px;width:1812px;height:29px;background:#f0f1f4"></div>
<div class="a" style="left:109px;top:499px;width:1px;height:29px;background:#fff"></div>
<div class="a" style="left:131px;top:499px;width:1px;height:29px;background:#fff"></div>
<div class="a" style="left:505px;top:499px;width:1px;height:29px;background:#fff"></div>
<div class="a" style="left:576px;top:499px;width:1px;height:29px;background:#fff"></div>
<div class="a" style="left:643px;top:499px;width:1px;height:29px;background:#fff"></div>
<div class="a" style="left:661px;top:499px;width:1px;height:29px;background:#fff"></div>
<div class="a" style="left:806px;top:499px;width:1px;height:29px;background:#fff"></div>
<div class="a" style="left:946px;top:499px;width:1px;height:29px;background:#fff"></div>
<div class="a" style="left:1185px;top:499px;width:1px;height:29px;background:#fff"></div>
<div class="a" style="left:1302px;top:499px;width:1px;height:29px;background:#fff"></div>
<div class="a" style="left:1345px;top:499px;width:1px;height:29px;background:#fff"></div>
<div class="a" style="left:1370px;top:499px;width:1px;height:29px;background:#fff"></div>
<div class="a" style="left:1420px;top:499px;width:1px;height:29px;background:#fff"></div>
<div class="a" style="left:1878px;top:499px;width:1px;height:29px;background:#fff"></div>
<div class="a" style="left:84px;top:529px;width:1812px;height:6px;background:#f0f1f4"></div>
<div class="a" style="left:109px;top:529px;width:1px;height:6px;background:#fff"></div>
<div class="a" style="left:1420px;top:529px;width:1px;height:6px;background:#fff"></div>
<div class="a" style="left:1421px;top:566px;width:475px;height:6px;background:#f0f1f4"></div>
<div class="a" style="left:84px;top:573px;width:1812px;height:29px;background:#f0f1f4"></div>
<div class="a" style="left:109px;top:573px;width:1px;height:29px;background:#fff"></div>
<div class="a" style="left:131px;top:573px;width:1px;height:29px;background:#fff"></div>
<div class="a" style="left:505px;top:573px;width:1px;height:29px;background:#fff"></div>
<div class="a" style="left:576px;top:573px;width:1px;height:29px;background:#fff"></div>
<div class="a" style="left:643px;top:573px;width:1px;height:29px;background:#fff"></div>
<div class="a" style="left:661px;top:573px;width:1px;height:29px;background:#fff"></div>
<div class="a" style="left:806px;top:573px;width:1px;height:29px;background:#fff"></div>
<div class="a" style="left:946px;top:573px;width:1px;height:29px;background:#fff"></div>
<div class="a" style="left:1185px;top:573px;width:1px;height:29px;background:#fff"></div>
<div class="a" style="left:1302px;top:573px;width:1px;height:29px;background:#fff"></div>
<div class="a" style="left:1345px;top:573px;width:1px;height:29px;background:#fff"></div>
<div class="a" style="left:1370px;top:573px;width:1px;height:29px;background:#fff"></div>
<div class="a" style="left:1420px;top:573px;width:1px;height:29px;background:#fff"></div>
<div class="a" style="left:1878px;top:573px;width:1px;height:29px;background:#fff"></div>
<div class="a" style="left:84px;top:603px;width:1812px;height:6px;background:#f0f1f4"></div>
<div class="a" style="left:109px;top:603px;width:1px;height:6px;background:#fff"></div>
<div class="a" style="left:1420px;top:603px;width:1px;height:6px;background:#fff"></div>
<div class="a" style="left:1421px;top:640px;width:475px;height:6px;background:#f0f1f4"></div>
<div class="a" style="left:84px;top:647px;width:1812px;height:29px;background:#f0f1f4"></div>
<div class="a" style="left:109px;top:647px;width:1px;height:29px;background:#fff"></div>
<div class="a" style="left:131px;top:647px;width:1px;height:29px;background:#fff"></div>
<div class="a" style="left:505px;top:647px;width:1px;height:29px;background:#fff"></div>
<div class="a" style="left:576px;top:647px;width:1px;height:29px;background:#fff"></div>
<div class="a" style="left:643px;top:647px;width:1px;height:29px;background:#fff"></div>
<div class="a" style="left:661px;top:647px;width:1px;height:29px;background:#fff"></div>
<div class="a" style="left:806px;top:647px;width:1px;height:29px;background:#fff"></div>
<div class="a" style="left:946px;top:647px;width:1px;height:29px;background:#fff"></div>
<div class="a" style="left:1185px;top:647px;width:1px;height:29px;background:#fff"></div>
<div class="a" style="left:1302px;top:647px;width:1px;height:29px;background:#fff"></div>
<div class="a" style="left:1345px;top:647px;width:1px;height:29px;background:#fff"></div>
<div class="a" style="left:1370px;top:647px;width:1px;height:29px;background:#fff"></div>
<div class="a" style="left:1420px;top:647px;width:1px;height:29px;background:#fff"></div>
<div class="a" style="left:1878px;top:647px;width:1px;height:29px;background:#fff"></div>
<div class="a" style="left:84px;top:677px;width:1812px;height:6px;background:#f0f1f4"></div>
<div class="a" style="left:109px;top:677px;width:1px;height:6px;background:#fff"></div>
<div class="a" style="left:1420px;top:677px;width:1px;height:6px;background:#fff"></div>
<div class="a" style="left:1421px;top:714px;width:475px;height:6px;background:#f0f1f4"></div>
<div class="a" style="left:84px;top:721px;width:1812px;height:29px;background:#f0f1f4"></div>
<div class="a" style="left:109px;top:721px;width:1px;height:29px;background:#fff"></div>
<div class="a" style="left:131px;top:721px;width:1px;height:29px;background:#fff"></div>
<div class="a" style="left:505px;top:721px;width:1px;height:29px;background:#fff"></div>
<div class="a" style="left:576px;top:721px;width:1px;height:29px;background:#fff"></div>
<div class="a" style="left:643px;top:721px;width:1px;height:29px;background:#fff"></div>
<div class="a" style="left:661px;top:721px;width:1px;height:29px;background:#fff"></div>
<div class="a" style="left:806px;top:721px;width:1px;height:29px;background:#fff"></div>
<div class="a" style="left:946px;top:721px;width:1px;height:29px;background:#fff"></div>
<div class="a" style="left:1185px;top:721px;width:1px;height:29px;background:#fff"></div>
<div class="a" style="left:1302px;top:721px;width:1px;height:29px;background:#fff"></div>
<div class="a" style="left:1345px;top:721px;width:1px;height:29px;background:#fff"></div>
<div class="a" style="left:1370px;top:721px;width:1px;height:29px;background:#fff"></div>
<div class="a" style="left:1420px;top:721px;width:1px;height:29px;background:#fff"></div>
<div class="a" style="left:1878px;top:721px;width:1px;height:29px;background:#fff"></div>
<div class="a" style="left:84px;top:751px;width:1812px;height:6px;background:#f0f1f4"></div>
<div class="a" style="left:109px;top:751px;width:1px;height:6px;background:#fff"></div>
<div class="a" style="left:1420px;top:751px;width:1px;height:6px;background:#fff"></div>
<div class="a" style="left:1421px;top:788px;width:475px;height:6px;background:#f0f1f4"></div>
<div class="a" style="left:84px;top:795px;width:1812px;height:29px;background:#f0f1f4"></div>
<div class="a" style="left:109px;top:795px;width:1px;height:29px;background:#fff"></div>
<div class="a" style="left:131px;top:795px;width:1px;height:29px;background:#fff"></div>
<div class="a" style="left:505px;top:795px;width:1px;height:29px;background:#fff"></div>
<div class="a" style="left:576px;top:795px;width:1px;height:29px;background:#fff"></div>
<div class="a" style="left:643px;top:795px;width:1px;height:29px;background:#fff"></div>
<div class="a" style="left:661px;top:795px;width:1px;height:29px;background:#fff"></div>
<div class="a" style="left:806px;top:795px;width:1px;height:29px;background:#fff"></div>
<div class="a" style="left:946px;top:795px;width:1px;height:29px;background:#fff"></div>
<div class="a" style="left:1185px;top:795px;width:1px;height:29px;background:#fff"></div>
<div class="a" style="left:1302px;top:795px;width:1px;height:29px;background:#fff"></div>
<div class="a" style="left:1345px;top:795px;width:1px;height:29px;background:#fff"></div>
<div class="a" style="left:1370px;top:795px;width:1px;height:29px;background:#fff"></div>
<div class="a" style="left:1420px;top:795px;width:1px;height:29px;background:#fff"></div>
<div class="a" style="left:1878px;top:795px;width:1px;height:29px;background:#fff"></div>
<div class="a" style="left:84px;top:825px;width:1812px;height:6px;background:#f0f1f4"></div>
<div class="a" style="left:109px;top:825px;width:1px;height:6px;background:#fff"></div>
<div class="a" style="left:1420px;top:825px;width:1px;height:6px;background:#fff"></div>
<div class="a" style="left:1421px;top:862px;width:475px;height:6px;background:#f0f1f4"></div>
<div class="a" style="left:84px;top:869px;width:1812px;height:29px;background:#f0f1f4"></div>
<div class="a" style="left:109px;top:869px;width:1px;height:29px;background:#fff"></div>
<div class="a" style="left:131px;top:869px;width:1px;height:29px;background:#fff"></div>
<div class="a" style="left:505px;top:869px;width:1px;height:29px;background:#fff"></div>
<div class="a" style="left:576px;top:869px;width:1px;height:29px;background:#fff"></div>
<div class="a" style="left:643px;top:869px;width:1px;height:29px;background:#fff"></div>
<div class="a" style="left:661px;top:869px;width:1px;height:29px;background:#fff"></div>
<div class="a" style="left:806px;top:869px;width:1px;height:29px;background:#fff"></div>
<div class="a" style="left:946px;top:869px;width:1px;height:29px;background:#fff"></div>
<div class="a" style="left:1185px;top:869px;width:1px;height:29px;background:#fff"></div>
<div class="a" style="left:1302px;top:869px;width:1px;height:29px;background:#fff"></div>
<div class="a" style="left:1345px;top:869px;width:1px;height:29px;background:#fff"></div>
<div class="a" style="left:1370px;top:869px;width:1px;height:29px;background:#fff"></div>
<div class="a" style="left:1420px;top:869px;width:1px;height:29px;background:#fff"></div>
<div class="a" style="left:1878px;top:869px;width:1px;height:29px;background:#fff"></div>
<div class="a" style="left:84px;top:899px;width:1812px;height:6px;background:#f0f1f4"></div>
<div class="a" style="left:109px;top:899px;width:1px;height:6px;background:#fff"></div>
<div class="a" style="left:1420px;top:899px;width:1px;height:6px;background:#fff"></div>
<div class="a" style="left:1421px;top:936px;width:475px;height:6px;background:#f0f1f4"></div>
<div class="a" style="left:84px;top:943px;width:1812px;height:29px;background:#f0f1f4"></div>
<div class="a" style="left:109px;top:943px;width:1px;height:29px;background:#fff"></div>
<div class="a" style="left:131px;top:943px;width:1px;height:29px;background:#fff"></div>
<div class="a" style="left:505px;top:943px;width:1px;height:29px;background:#fff"></div>
<div class="a" style="left:576px;top:943px;width:1px;height:29px;background:#fff"></div>
<div class="a" style="left:643px;top:943px;width:1px;height:29px;background:#fff"></div>
<div class="a" style="left:661px;top:943px;width:1px;height:29px;background:#fff"></div>
<div class="a" style="left:806px;top:943px;width:1px;height:29px;background:#fff"></div>
<div class="a" style="left:946px;top:943px;width:1px;height:29px;background:#fff"></div>
<div class="a" style="left:1185px;top:943px;width:1px;height:29px;background:#fff"></div>
<div class="a" style="left:1302px;top:943px;width:1px;height:29px;background:#fff"></div>
<div class="a" style="left:1345px;top:943px;width:1px;height:29px;background:#fff"></div>
<div class="a" style="left:1370px;top:943px;width:1px;height:29px;background:#fff"></div>
<div class="a" style="left:1420px;top:943px;width:1px;height:29px;background:#fff"></div>
<div class="a" style="left:1878px;top:943px;width:1px;height:29px;background:#fff"></div>
<div class="a" style="left:84px;top:973px;width:1812px;height:6px;background:#f0f1f4"></div>
<div class="a" style="left:109px;top:973px;width:1px;height:6px;background:#fff"></div>
<div class="a" style="left:1420px;top:973px;width:1px;height:6px;background:#fff"></div>
<div class="a" style="left:80px;width:26px;text-align:right;top:471.2px;font-size:13px;line-height:13px;color:#111;letter-spacing:-0.4px">1</div>
<div class="cb" style="left:114px;top:470.3px"></div>
<div class="a" style="left:135.2px;top:471.2px;font-size:13px;line-height:13px;color:#111;font-weight:400;letter-spacing:0.95px;">Act4pros</div>
<svg class="a" style="left:509px;top:463.4px" width="80" height="22"><use href="#rowic" y="1"/></svg>
<div class="a" style="left:950.5px;top:471.2px;font-size:13px;line-height:13px;color:#111;font-weight:400;letter-spacing:0.45px;">1370 South 74th Street, Suite 106</div>
<div class="a" style="left:1189.5px;top:471.2px;font-size:13px;line-height:13px;color:#111;font-weight:400;letter-spacing:0.85px;">West Allis</div>
<div class="a" style="left:1306.2px;top:471.2px;font-size:13px;line-height:13px;color:#111;font-weight:400;letter-spacing:0.5px;">WI</div>
<svg class="a" style="left:1349px;top:472.9px" width="14" height="10"><use href="#env"/></svg>
<div class="a" style="left:1373.8px;top:471.2px;font-size:13px;line-height:13px;color:#111;font-weight:400;letter-spacing:0.1px;">53214</div>
<div class="a" style="left:1423.8px;top:471.2px;font-size:13px;line-height:13px;color:#111;font-weight:400;letter-spacing:0.8px;">ACC</div>
<svg class="a" style="left:1882px;top:471.9px" width="10" height="10"><use href="#dn"/></svg>
<div class="a" style="left:80px;width:26px;text-align:right;top:508.2px;font-size:13px;line-height:13px;color:#111;letter-spacing:-0.4px">2</div>
<div class="cb" style="left:114px;top:507.3px"></div>
<div class="a" style="left:135.2px;top:508.2px;font-size:13px;line-height:13px;color:#111;font-weight:400;letter-spacing:0.95px;">Active Pak</div>
<svg class="a" style="left:509px;top:500.4px" width="80" height="22"><use href="#rowic" y="1"/></svg>
<div class="a" style="left:950.5px;top:508.2px;font-size:13px;line-height:13px;color:#111;font-weight:400;letter-spacing:0.45px;">1437 Dewey Ave</div>
<div class="a" style="left:1189.5px;top:508.2px;font-size:13px;line-height:13px;color:#111;font-weight:400;letter-spacing:0.85px;">Beloit</div>
<div class="a" style="left:1306.2px;top:508.2px;font-size:13px;line-height:13px;color:#111;font-weight:400;letter-spacing:0.5px;">WI</div>
<svg class="a" style="left:1349px;top:509.9px" width="14" height="10"><use href="#env"/></svg>
<div class="a" style="left:1373.8px;top:508.2px;font-size:13px;line-height:13px;color:#111;font-weight:400;letter-spacing:0.1px;">53511</div>
<div class="a" style="left:1423.8px;top:508.2px;font-size:13px;line-height:13px;color:#111;font-weight:400;letter-spacing:0.8px;">ACT/Client</div>
<svg class="a" style="left:1882px;top:508.9px" width="10" height="10"><use href="#dn"/></svg>
<div class="a" style="left:80px;width:26px;text-align:right;top:545.2px;font-size:13px;line-height:13px;color:#111;letter-spacing:-0.4px">3</div>
<div class="cb" style="left:114px;top:544.3px"></div>
<div class="a" style="left:135.2px;top:545.2px;font-size:13px;line-height:13px;color:#111;font-weight:400;letter-spacing:0.95px;">Allied Plastics, Inc.</div>
<svg class="a" style="left:509px;top:537.4px" width="80" height="22"><use href="#rowic" y="1"/></svg>
<div class="a" style="left:950.5px;top:545.2px;font-size:13px;line-height:13px;color:#111;font-weight:400;letter-spacing:0.45px;">150 Holy Hill Rd.</div>
<div class="a" style="left:1189.5px;top:545.2px;font-size:13px;line-height:13px;color:#111;font-weight:400;letter-spacing:0.85px;">Twin Lakes</div>
<div class="a" style="left:1306.2px;top:545.2px;font-size:13px;line-height:13px;color:#111;font-weight:400;letter-spacing:0.5px;">WI</div>
<svg class="a" style="left:1349px;top:546.9px" width="14" height="10"><use href="#env"/></svg>
<div class="a" style="left:1373.8px;top:545.2px;font-size:13px;line-height:13px;color:#111;font-weight:400;letter-spacing:0.1px;">53181</div>
<div class="a" style="left:1423.8px;top:545.2px;font-size:13px;line-height:13px;color:#111;font-weight:400;letter-spacing:0.8px;">ACT/Prospect</div>
<svg class="a" style="left:1882px;top:545.9px" width="10" height="10"><use href="#dn"/></svg>
<div class="a" style="left:80px;width:26px;text-align:right;top:582.2px;font-size:13px;line-height:13px;color:#111;letter-spacing:-0.4px">4</div>
<div class="cb" style="left:114px;top:581.3px"></div>
<div class="a" style="left:135.2px;top:582.2px;font-size:13px;line-height:13px;color:#111;font-weight:400;letter-spacing:0.95px;">Alpha Business Connections</div>
<svg class="a" style="left:509px;top:574.4px" width="80" height="22"><use href="#rowic" y="1"/></svg>
<div class="a" style="left:950.5px;top:582.2px;font-size:13px;line-height:13px;color:#111;font-weight:400;letter-spacing:0.45px;">N2861 Driftwood Beach Road</div>
<div class="a" style="left:1189.5px;top:582.2px;font-size:13px;line-height:13px;color:#111;font-weight:400;letter-spacing:0.85px;">Chilton</div>
<div class="a" style="left:1306.2px;top:582.2px;font-size:13px;line-height:13px;color:#111;font-weight:400;letter-spacing:0.5px;">WI</div>
<svg class="a" style="left:1349px;top:583.9px" width="14" height="10"><use href="#env"/></svg>
<div class="a" style="left:1373.8px;top:582.2px;font-size:13px;line-height:13px;color:#111;font-weight:400;letter-spacing:0.1px;">53104</div>
<div class="a" style="left:1423.8px;top:582.2px;font-size:13px;line-height:13px;color:#111;font-weight:400;letter-spacing:0.8px;">ACT/Prospect</div>
<svg class="a" style="left:1882px;top:582.9px" width="10" height="10"><use href="#dn"/></svg>
<div class="a" style="left:80px;width:26px;text-align:right;top:619.2px;font-size:13px;line-height:13px;color:#111;letter-spacing:-0.4px">5</div>
<div class="cb" style="left:114px;top:618.3px"></div>
<div class="a" style="left:135.2px;top:619.2px;font-size:13px;line-height:13px;color:#111;font-weight:400;letter-spacing:0.95px;">BD Pros</div>
<svg class="a" style="left:509px;top:611.4px" width="80" height="22"><use href="#rowic" y="1"/></svg>
<div class="a" style="left:950.5px;top:619.2px;font-size:13px;line-height:13px;color:#111;font-weight:400;letter-spacing:0.45px;">427 E. Stewart Ave.</div>
<div class="a" style="left:1189.5px;top:619.2px;font-size:13px;line-height:13px;color:#111;font-weight:400;letter-spacing:0.85px;">Milwaukee</div>
<div class="a" style="left:1306.2px;top:619.2px;font-size:13px;line-height:13px;color:#111;font-weight:400;letter-spacing:0.5px;">WI</div>
<svg class="a" style="left:1349px;top:620.9px" width="14" height="10"><use href="#env"/></svg>
<div class="a" style="left:1373.8px;top:619.2px;font-size:13px;line-height:13px;color:#111;font-weight:400;letter-spacing:0.1px;">53207</div>
<div class="a" style="left:1423.8px;top:619.2px;font-size:13px;line-height:13px;color:#111;font-weight:400;letter-spacing:0.8px;">Zoho/Partner</div>
<svg class="a" style="left:1882px;top:619.9px" width="10" height="10"><use href="#dn"/></svg>
<div class="a" style="left:80px;width:26px;text-align:right;top:656.2px;font-size:13px;line-height:13px;color:#111;letter-spacing:-0.4px">6</div>
<div class="cb" style="left:114px;top:655.3px"></div>
<div class="a" style="left:135.2px;top:656.2px;font-size:13px;line-height:13px;color:#111;font-weight:400;letter-spacing:0.95px;">Bern Office Systems, LLC</div>
<svg class="a" style="left:509px;top:648.4px" width="80" height="22"><use href="#rowic" y="1"/></svg>
<div class="a" style="left:950.5px;top:656.2px;font-size:13px;line-height:13px;color:#111;font-weight:400;letter-spacing:0.45px;">523 W. National Ave.</div>
<div class="a" style="left:1189.5px;top:656.2px;font-size:13px;line-height:13px;color:#111;font-weight:400;letter-spacing:0.85px;">Milwaukee</div>
<div class="a" style="left:1306.2px;top:656.2px;font-size:13px;line-height:13px;color:#111;font-weight:400;letter-spacing:0.5px;">WI</div>
<svg class="a" style="left:1349px;top:657.9px" width="14" height="10"><use href="#env"/></svg>
<div class="a" style="left:1373.8px;top:656.2px;font-size:13px;line-height:13px;color:#111;font-weight:400;letter-spacing:0.1px;">53204</div>
<div class="a" style="left:1423.8px;top:656.2px;font-size:13px;line-height:13px;color:#111;font-weight:400;letter-spacing:0.8px;">ACT/Client</div>
<svg class="a" style="left:1882px;top:656.9px" width="10" height="10"><use href="#dn"/></svg>
<div class="a" style="left:80px;width:26px;text-align:right;top:693.2px;font-size:13px;line-height:13px;color:#111;letter-spacing:-0.4px">7</div>
<div class="cb" style="left:114px;top:692.3px"></div>
<div class="a" style="left:135.2px;top:693.2px;font-size:13px;line-height:13px;color:#111;font-weight:400;letter-spacing:0.95px;">BPI Inc.</div>
<svg class="a" style="left:509px;top:685.4px" width="80" height="22"><use href="#rowic" y="1"/></svg>
<div class="a" style="left:950.5px;top:693.2px;font-size:13px;line-height:13px;color:#111;font-weight:400;letter-spacing:0.45px;">11331 W Rogers St</div>
<div class="a" style="left:1189.5px;top:693.2px;font-size:13px;line-height:13px;color:#111;font-weight:400;letter-spacing:0.85px;">Milwaukee</div>
<div class="a" style="left:1306.2px;top:693.2px;font-size:13px;line-height:13px;color:#111;font-weight:400;letter-spacing:0.5px;">WI</div>
<svg class="a" style="left:1349px;top:694.9px" width="14" height="10"><use href="#env"/></svg>
<div class="a" style="left:1373.8px;top:693.2px;font-size:13px;line-height:13px;color:#111;font-weight:400;letter-spacing:0.1px;">53227</div>
<div class="a" style="left:1423.8px;top:693.2px;font-size:13px;line-height:13px;color:#111;font-weight:400;letter-spacing:0.8px;">Z-Leave Alone</div>
<svg class="a" style="left:1882px;top:693.9px" width="10" height="10"><use href="#dn"/></svg>
<div class="a" style="left:80px;width:26px;text-align:right;top:730.2px;font-size:13px;line-height:13px;color:#111;letter-spacing:-0.4px">8</div>
<div class="cb" style="left:114px;top:729.3px"></div>
<div class="a" style="left:135.2px;top:730.2px;font-size:13px;line-height:13px;color:#111;font-weight:400;letter-spacing:0.95px;">Broadlook Technologies</div>
<svg class="a" style="left:509px;top:722.4px" width="80" height="22"><use href="#rowic" y="1"/></svg>
<div class="a" style="left:950.5px;top:730.2px;font-size:13px;line-height:13px;color:#111;font-weight:400;letter-spacing:0.45px;">N35 W21140 Capitol Drive Ste 7</div>
<div class="a" style="left:1189.5px;top:730.2px;font-size:13px;line-height:13px;color:#111;font-weight:400;letter-spacing:0.85px;">Pewaukee</div>
<div class="a" style="left:1306.2px;top:730.2px;font-size:13px;line-height:13px;color:#111;font-weight:400;letter-spacing:0.5px;">WI</div>
<svg class="a" style="left:1349px;top:731.9px" width="14" height="10"><use href="#env"/></svg>
<div class="a" style="left:1373.8px;top:730.2px;font-size:13px;line-height:13px;color:#111;font-weight:400;letter-spacing:0.1px;">53072</div>
<div class="a" style="left:1423.8px;top:730.2px;font-size:13px;line-height:13px;color:#111;font-weight:400;letter-spacing:0.8px;">Z-Archive</div>
<svg class="a" style="left:1882px;top:730.9px" width="10" height="10"><use href="#dn"/></svg>
<div class="a" style="left:80px;width:26px;text-align:right;top:767.2px;font-size:13px;line-height:13px;color:#111;letter-spacing:-0.4px">9</div>
<div class="cb" style="left:114px;top:766.3px"></div>
<div class="a" style="left:135.2px;top:767.2px;font-size:13px;line-height:13px;color:#111;font-weight:400;letter-spacing:0.95px;">Broadlook Technologies</div>
<svg class="a" style="left:509px;top:759.4px" width="80" height="22"><use href="#rowic" y="1"/></svg>
<div class="a" style="left:950.5px;top:767.2px;font-size:13px;line-height:13px;color:#111;font-weight:400;letter-spacing:0.45px;">N35 W21140 Capitol Drive Ste 7</div>
<div class="a" style="left:1189.5px;top:767.2px;font-size:13px;line-height:13px;color:#111;font-weight:400;letter-spacing:0.85px;">Pewaukee</div>
<div class="a" style="left:1306.2px;top:767.2px;font-size:13px;line-height:13px;color:#111;font-weight:400;letter-spacing:0.5px;">WI</div>
<svg class="a" style="left:1349px;top:768.9px" width="14" height="10"><use href="#env"/></svg>
<div class="a" style="left:1373.8px;top:767.2px;font-size:13px;line-height:13px;color:#111;font-weight:400;letter-spacing:0.1px;">53072</div>
<div class="a" style="left:1423.8px;top:767.2px;font-size:13px;line-height:13px;color:#111;font-weight:400;letter-spacing:0.8px;">Z-Archive</div>
<svg class="a" style="left:1882px;top:767.9px" width="10" height="10"><use href="#dn"/></svg>
<div class="a" style="left:80px;width:26px;text-align:right;top:804.2px;font-size:13px;line-height:13px;color:#111;letter-spacing:-0.4px">10</div>
<div class="cb" style="left:114px;top:803.3px"></div>
<div class="a" style="left:135.2px;top:804.2px;font-size:13px;line-height:13px;color:#111;font-weight:400;letter-spacing:0.95px;">Competitive Strategies, Inc.</div>
<svg class="a" style="left:509px;top:796.4px" width="80" height="22"><use href="#rowic" y="1"/></svg>
<div class="a" style="left:950.5px;top:804.2px;font-size:13px;line-height:13px;color:#111;font-weight:400;letter-spacing:0.45px;">2631 N Meade St Ste 202</div>
<div class="a" style="left:1189.5px;top:804.2px;font-size:13px;line-height:13px;color:#111;font-weight:400;letter-spacing:0.85px;">APPLETON</div>
<div class="a" style="left:1306.2px;top:804.2px;font-size:13px;line-height:13px;color:#111;font-weight:400;letter-spacing:0.5px;">WI</div>
<svg class="a" style="left:1349px;top:805.9px" width="14" height="10"><use href="#env"/></svg>
<div class="a" style="left:1373.8px;top:804.2px;font-size:13px;line-height:13px;color:#111;font-weight:400;letter-spacing:0.1px;">54911</div>
<div class="a" style="left:1423.8px;top:804.2px;font-size:13px;line-height:13px;color:#111;font-weight:400;letter-spacing:0.8px;">ACC</div>
<svg class="a" style="left:1882px;top:804.9px" width="10" height="10"><use href="#dn"/></svg>
<div class="a" style="left:80px;width:26px;text-align:right;top:841.2px;font-size:13px;line-height:13px;color:#111;letter-spacing:-0.4px">11</div>
<div class="cb" style="left:114px;top:840.3px"></div>
<div class="a" style="left:135.2px;top:841.2px;font-size:13px;line-height:13px;color:#111;font-weight:400;letter-spacing:0.95px;">Computing Connections, Inc.</div>
<svg class="a" style="left:509px;top:833.4px" width="80" height="22"><use href="#rowic" y="1"/></svg>
<div class="a" style="left:950.5px;top:841.2px;font-size:13px;line-height:13px;color:#111;font-weight:400;letter-spacing:0.45px;">4500 Sovereign Drive</div>
<div class="a" style="left:1189.5px;top:841.2px;font-size:13px;line-height:13px;color:#111;font-weight:400;letter-spacing:0.85px;">New Berlin</div>
<div class="a" style="left:1306.2px;top:841.2px;font-size:13px;line-height:13px;color:#111;font-weight:400;letter-spacing:0.5px;">WI</div>
<svg class="a" style="left:1349px;top:842.9px" width="14" height="10"><use href="#env"/></svg>
<div class="a" style="left:1373.8px;top:841.2px;font-size:13px;line-height:13px;color:#111;font-weight:400;letter-spacing:0.1px;">53151</div>
<div class="a" style="left:1423.8px;top:841.2px;font-size:13px;line-height:13px;color:#111;font-weight:400;letter-spacing:0.8px;">ACC</div>
<svg class="a" style="left:1882px;top:841.9px" width="10" height="10"><use href="#dn"/></svg>
<div class="a" style="left:80px;width:26px;text-align:right;top:878.2px;font-size:13px;line-height:13px;color:#111;letter-spacing:-0.4px">12</div>
<div class="cb" style="left:114px;top:877.3px"></div>
<div class="a" style="left:135.2px;top:878.2px;font-size:13px;line-height:13px;color:#111;font-weight:400;letter-spacing:0.95px;">CRL Senior Living Communities</div>
<svg class="a" style="left:509px;top:870.4px" width="80" height="22"><use href="#rowic" y="1"/></svg>
<div class="a" style="left:950.5px;top:878.2px;font-size:13px;line-height:13px;color:#111;font-weight:400;letter-spacing:0.45px;">131 E. North Water St. Suite 2201</div>
<div class="a" style="left:1189.5px;top:878.2px;font-size:13px;line-height:13px;color:#111;font-weight:400;letter-spacing:0.85px;">Neenah</div>
<div class="a" style="left:1306.2px;top:878.2px;font-size:13px;line-height:13px;color:#111;font-weight:400;letter-spacing:0.5px;">WI</div>
<svg class="a" style="left:1349px;top:879.9px" width="14" height="10"><use href="#env"/></svg>
<div class="a" style="left:1373.8px;top:878.2px;font-size:13px;line-height:13px;color:#111;font-weight:400;letter-spacing:0.1px;">54956</div>
<div class="a" style="left:1423.8px;top:878.2px;font-size:13px;line-height:13px;color:#111;font-weight:400;letter-spacing:0.8px;">ACT/Client</div>
<svg class="a" style="left:1882px;top:878.9px" width="10" height="10"><use href="#dn"/></svg>
<div class="a" style="left:80px;width:26px;text-align:right;top:915.2px;font-size:13px;line-height:13px;color:#111;letter-spacing:-0.4px">13</div>
<div class="cb" style="left:114px;top:914.3px"></div>
<div class="a" style="left:135.2px;top:915.2px;font-size:13px;line-height:13px;color:#111;font-weight:400;letter-spacing:0.95px;">Dominion LLC</div>
<svg class="a" style="left:509px;top:907.4px" width="80" height="22"><use href="#rowic" y="1"/></svg>
<div class="a" style="left:1189.5px;top:915.2px;font-size:13px;line-height:13px;color:#111;font-weight:400;letter-spacing:0.85px;">Milwaulkee</div>
<div class="a" style="left:1306.2px;top:915.2px;font-size:13px;line-height:13px;color:#111;font-weight:400;letter-spacing:0.5px;">WI</div>
<svg class="a" style="left:1349px;top:916.9px" width="14" height="10"><use href="#env"/></svg>
<div class="a" style="left:1423.8px;top:915.2px;font-size:13px;line-height:13px;color:#111;font-weight:400;letter-spacing:0.8px;">ACT/Prospect</div>
<svg class="a" style="left:1882px;top:915.9px" width="10" height="10"><use href="#dn"/></svg>
<div class="a" style="left:80px;width:26px;text-align:right;top:952.2px;font-size:13px;line-height:13px;color:#111;letter-spacing:-0.4px">14</div>
<div class="cb" style="left:114px;top:951.3px"></div>
<div class="a" style="left:135.2px;top:952.2px;font-size:13px;line-height:13px;color:#111;font-weight:400;letter-spacing:0.95px;">Door County Coffee</div>
<svg class="a" style="left:509px;top:944.4px" width="80" height="22"><use href="#rowic" y="1"/></svg>
<div class="a" style="left:950.5px;top:952.2px;font-size:13px;line-height:13px;color:#111;font-weight:400;letter-spacing:0.45px;">5773 Highway 42</div>
<div class="a" style="left:1189.5px;top:952.2px;font-size:13px;line-height:13px;color:#111;font-weight:400;letter-spacing:0.85px;">Sturgeon Bay</div>
<div class="a" style="left:1306.2px;top:952.2px;font-size:13px;line-height:13px;color:#111;font-weight:400;letter-spacing:0.5px;">WI</div>
<svg class="a" style="left:1349px;top:953.9px" width="14" height="10"><use href="#env"/></svg>
<div class="a" style="left:1373.8px;top:952.2px;font-size:13px;line-height:13px;color:#111;font-weight:400;letter-spacing:0.1px;">54235</div>
<div class="a" style="left:1423.8px;top:952.2px;font-size:13px;line-height:13px;color:#111;font-weight:400;letter-spacing:0.8px;">ACT/Prospect</div>
<svg class="a" style="left:1882px;top:952.9px" width="10" height="10"><use href="#dn"/></svg>
<div class="a" style="left:642px;top:470px;width:292px;height:502px;overflow:hidden;background:#fafafa"><div class="a" style="left:0;top:0;width:292px;height:520px;filter:blur(6.5px)"><div class="a" style="left:-2px;top:-2px;width:20px;height:15px;background:#f8d6d6"></div><div class="a" style="left:25px;top:1px;width:96px;height:13px;background:#efe6d3"></div><div class="a" style="left:169px;top:1px;width:100px;height:13px;background:#d6d6d8"></div><div class="a" style="left:-10px;top:29px;width:320px;height:36px;background:#eff0f3"></div><div class="a" style="left:-2px;top:35px;width:20px;height:15px;background:#f8d6d6"></div><div class="a" style="left:25px;top:38px;width:83px;height:13px;background:#e6dcc5"></div><div class="a" style="left:169px;top:38px;width:82px;height:13px;background:#d6d6d8"></div><div class="a" style="left:-2px;top:72px;width:20px;height:15px;background:#f8d6d6"></div><div class="a" style="left:25px;top:75px;width:89px;height:13px;background:#efe6d3"></div><div class="a" style="left:169px;top:75px;width:86px;height:13px;background:#d6d6d8"></div><div class="a" style="left:-10px;top:103px;width:320px;height:36px;background:#eff0f3"></div><div class="a" style="left:-2px;top:109px;width:20px;height:15px;background:#f8d6d6"></div><div class="a" style="left:25px;top:112px;width:118px;height:13px;background:#e6dcc5"></div><div class="a" style="left:169px;top:112px;width:122px;height:13px;background:#d6d6d8"></div><div class="a" style="left:-2px;top:146px;width:20px;height:15px;background:#f8d6d6"></div><div class="a" style="left:25px;top:149px;width:73px;height:13px;background:#efe6d3"></div><div class="a" style="left:169px;top:149px;width:77px;height:13px;background:#d6d6d8"></div><div class="a" style="left:-10px;top:177px;width:320px;height:36px;background:#eff0f3"></div><div class="a" style="left:-2px;top:183px;width:20px;height:15px;background:#f8d6d6"></div><div class="a" style="left:25px;top:186px;width:74px;height:13px;background:#e6dcc5"></div><div class="a" style="left:169px;top:186px;width:71px;height:13px;background:#d6d6d8"></div><div class="a" style="left:-2px;top:220px;width:20px;height:15px;background:#f8d6d6"></div><div class="a" style="left:25px;top:223px;width:86px;height:13px;background:#efe6d3"></div><div class="a" style="left:169px;top:223px;width:81px;height:13px;background:#d6d6d8"></div><div class="a" style="left:-10px;top:251px;width:320px;height:36px;background:#eff0f3"></div><div class="a" style="left:-2px;top:257px;width:20px;height:15px;background:#f8d6d6"></div><div class="a" style="left:25px;top:260px;width:32px;height:13px;background:#e6dcc5"></div><div class="a" style="left:169px;top:260px;width:30px;height:13px;background:#d6d6d8"></div><div class="a" style="left:-2px;top:294px;width:20px;height:15px;background:#f8d6d6"></div><div class="a" style="left:25px;top:297px;width:76px;height:13px;background:#efe6d3"></div><div class="a" style="left:169px;top:297px;width:78px;height:13px;background:#d6d6d8"></div><div class="a" style="left:-10px;top:325px;width:320px;height:36px;background:#eff0f3"></div><div class="a" style="left:-2px;top:331px;width:20px;height:15px;background:#f8d6d6"></div><div class="a" style="left:25px;top:334px;width:121px;height:13px;background:#e6dcc5"></div><div class="a" style="left:169px;top:334px;width:122px;height:13px;background:#d6d6d8"></div><div class="a" style="left:-2px;top:368px;width:20px;height:15px;background:#f8d6d6"></div><div class="a" style="left:25px;top:371px;width:90px;height:13px;background:#efe6d3"></div><div class="a" style="left:169px;top:371px;width:90px;height:13px;background:#d6d6d8"></div><div class="a" style="left:-10px;top:399px;width:320px;height:36px;background:#eff0f3"></div><div class="a" style="left:-2px;top:405px;width:20px;height:15px;background:#f8d6d6"></div><div class="a" style="left:25px;top:408px;width:65px;height:13px;background:#e6dcc5"></div><div class="a" style="left:169px;top:408px;width:62px;height:13px;background:#d6d6d8"></div><div class="a" style="left:-2px;top:442px;width:20px;height:15px;background:#f8d6d6"></div><div class="a" style="left:25px;top:445px;width:91px;height:13px;background:#efe6d3"></div><div class="a" style="left:169px;top:445px;width:87px;height:13px;background:#d6d6d8"></div><div class="a" style="left:-10px;top:473px;width:320px;height:36px;background:#eff0f3"></div><div class="a" style="left:-2px;top:479px;width:20px;height:15px;background:#f8d6d6"></div><div class="a" style="left:25px;top:482px;width:90px;height:13px;background:#e6dcc5"></div><div class="a" style="left:169px;top:482px;width:87px;height:13px;background:#d6d6d8"></div></div></div>
<div class="a" style="left:934px;top:805px;width:1px;height:10px;background:#2f7bd6"></div>
<svg class="a" style="left:0;top:960px" width="12" height="12"><path d="M0 3 Q1.5 11 8 12 H0z" fill="#fff"/></svg>
<svg class="a" style="left:1900px;top:0" width="12" height="12"><path d="M5 0 Q11 1 12 7 V0z" fill="#fff"/></svg>
<svg class="a" style="left:0;top:0" width="1912" height="972" viewBox="0 0 1912 972">
<defs><filter id="sh" x="-10%" y="-10%" width="130%" height="140%"><feDropShadow dx="2" dy="3" stdDeviation="1.8" flood-color="#000" flood-opacity="0.45"/></filter></defs>
<g filter="url(#sh)" fill="#081a50">
<path d="M1362 165 H1609 A61 61 0 0 1 1609 287 H1362 A61 61 0 0 1 1316 266 L1178 279 L1303 222 A61 61 0 0 1 1362 165z"/>
</g>
<g filter="url(#sh)" fill="#081a50">
<path d="M461 359.3 H1025 A35.5 35.5 0 0 1 1025 430.3 H461 A35.5 35.5 0 0 1 426.5 396 L300 335 L437 370 A35.5 35.5 0 0 1 461 359.3z"/>
</g></svg>
<div class="a" style="left:1376.5px;top:209.5px;font-size:31px;line-height:31px;color:#fff;font-weight:400;letter-spacing:0.65px;">Lookup by List</div>
<div class="a" style="left:522.5px;top:378.6px;font-size:32px;line-height:32px;color:#fff;font-weight:400;letter-spacing:0.2px;">Lookup by 2+ Groups at once.</div></body></html>
